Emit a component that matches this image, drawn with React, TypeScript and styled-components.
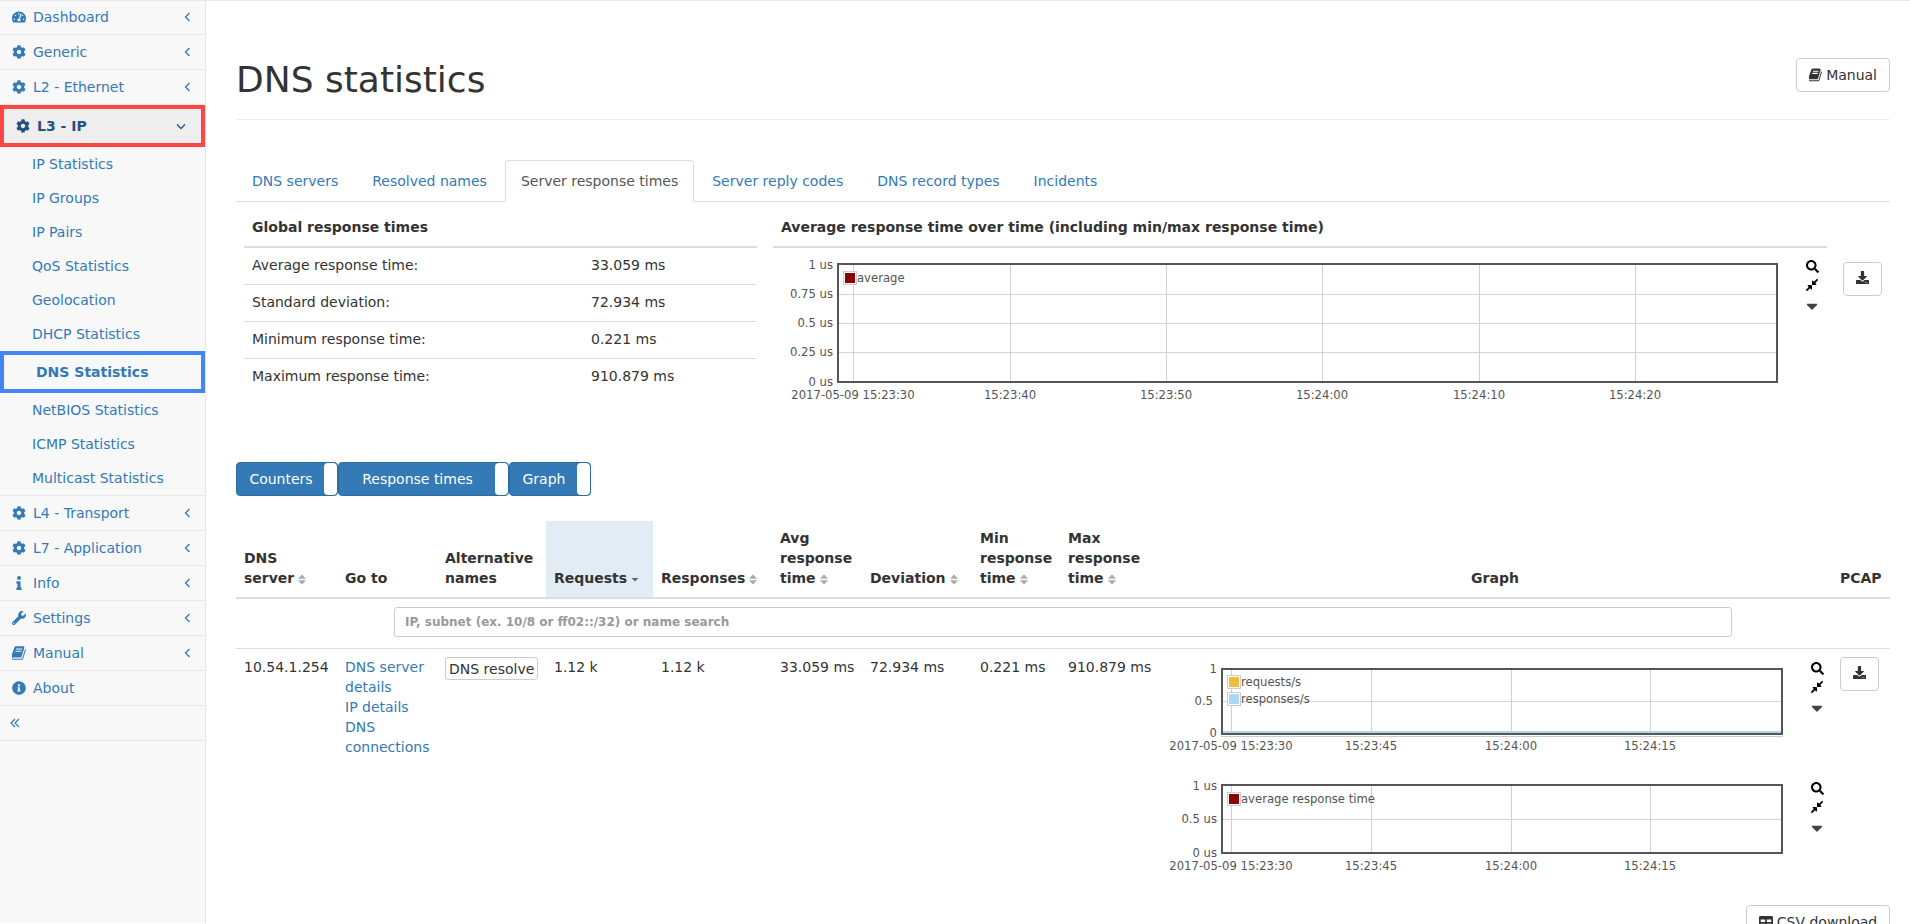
import React from 'react'
import styled, { createGlobalStyle } from 'styled-components'
import {
  FaCaretDown,
  FaCog,
  FaCompressAlt,
  FaDownload,
  FaInfo,
  FaInfoCircle,
  FaSearch,
  FaTable,
  FaTachometerAlt,
  FaWrench,
} from 'react-icons/fa'

const GlobalStyle = createGlobalStyle`
  html, body {
    margin: 0;
    height: 924px;
    overflow: hidden;
    background: #fff;
  }
  body {
    font-family: "DejaVu Sans", sans-serif;
    font-size: 14px;
    line-height: 20px;
    color: #333;
  }
  * {
    box-sizing: border-box;
  }
`

const Page = styled.div`
  display: flex;
  width: 1910px;
  height: 924px;
  overflow: hidden;
  border-top: 1px solid #e7e7e7;
`

// sidebar
const Sidebar = styled.nav`
  flex: 0 0 206px;
  height: 923px;
  margin-top: -1px;
  background: #f8f8f8;
  border-right: 1px solid #e7e7e7;
`

const MenuItem = styled.a`
  display: flex;
  align-items: center;
  height: 35px;
  border-bottom: 1px solid #e7e7e7;
  color: #337ab7;
`

const ActiveMenuItem = styled(MenuItem)`
  height: 42px;
  border: 4px solid #ff4646;
  background: #eee;
  color: #23527c;
  font-weight: 700;
`

const MenuIcon = styled.span`
  display: flex;
  justify-content: center;
  width: 14px;
  margin: 0 7px 0 12px;
  font-size: 14px;
`

const MenuLabel = styled.span`
  flex: 1;
`

const MenuChevron = styled.span<{ $right?: number }>`
  display: flex;
  justify-content: center;
  width: 14px;
  margin-right: ${(p) => p.$right ?? 11}px;
`

const SubMenu = styled.div`
  border-bottom: 1px solid #e7e7e7;
`

const SubItem = styled.a`
  display: flex;
  align-items: center;
  height: 34px;
  padding-left: 32px;
  color: #337ab7;
`

const ActiveSubItem = styled(SubItem)`
  height: 42px;
  padding-left: 32px;
  border: 4px solid #4285f4;
  font-weight: 700;
`

const CollapseItem = styled(MenuItem)`
  padding-left: 10px;
`

// main column
const Main = styled.main`
  flex: 1;
  padding: 0 20px 0 30px;
`

const PageHeader = styled.header`
  display: flex;
  justify-content: space-between;
  height: 119px;
  border-bottom: 1px solid #eee;
`

const Title = styled.h1`
  margin: 59px 0 0;
  font-size: 36px;
  line-height: 40px;
  font-weight: 500;
`

const DefaultButton = styled.button`
  display: inline-flex;
  align-items: center;
  justify-content: center;
  gap: 4px;
  height: 34px;
  padding: 0 12px;
  font: inherit;
  color: #333;
  background: #fff;
  border: 1px solid #ccc;
  border-radius: 4px;
`

const ManualButton = styled(DefaultButton)`
  margin-top: 57px;
  width: 94px;
`

const Tabs = styled.ul`
  display: flex;
  height: 42px;
  margin: 40px 0 0;
  padding: 0;
  list-style: none;
  border-bottom: 1px solid #ddd;
`

const Tab = styled.li<{ $active?: boolean }>`
  height: 42px;
  margin-right: 2px;
  padding: 10px 15px;
  border: 1px solid ${(p) => (p.$active ? '#ddd' : 'transparent')};
  border-bottom-color: ${(p) => (p.$active ? '#fff' : 'transparent')};
  border-radius: 4px 4px 0 0;
  background: ${(p) => (p.$active ? '#fff' : 'transparent')};
  color: ${(p) => (p.$active ? '#555' : '#337ab7')};
`

const Overview = styled.section`
  display: flex;
  align-items: flex-start;
  height: 260px;
  padding: 8px 0 0 8px;
`

const StatsTable = styled.table`
  width: 513px;
  border-collapse: separate;
  border-spacing: 0;
  table-layout: fixed;
  th {
    height: 38px;
    padding: 7px 8px 9px;
    text-align: left;
    border-bottom: 2px solid #ddd;
  }
  td {
    height: 37px;
    padding: 7px 8px 9px;
    vertical-align: top;
    border-bottom: 1px solid #ddd;
  }
  tr:last-child td {
    border-bottom: none;
  }
`

const ChartPanel = styled.div`
  width: 1054px;
  margin-left: 16px;
`

const ChartHeading = styled.div`
  height: 38px;
  padding: 7px 8px 9px;
  font-weight: 700;
  border-bottom: 2px solid #ddd;
`

const ChartRow = styled.div<{ $height?: number }>`
  display: flex;
  align-items: flex-start;
  height: ${(p) => p.$height ?? 120}px;
`

const ChartSvg = styled.svg`
  display: block;
  flex: none;
  font-family: "DejaVu Sans", sans-serif;
  font-size: 11.62px;
  fill: #545454;
`

const ChartTools = styled.div<{ $top: number }>`
  display: flex;
  flex: none;
  flex-direction: column;
  align-items: center;
  width: 24px;
  padding-top: ${(p) => p.$top}px;
  color: #000;
  svg {
    display: block;
    flex: none;
    width: 13px;
    height: 13px;
    margin-bottom: 5.5px;
  }
  svg:nth-child(2) {
    width: 14px;
    height: 14px;
  }
  svg:last-child {
    margin: -0.5px 0 0;
    width: 12px;
    height: 18px;
    color: #444;
  }
`

const OverviewDownload = styled(DefaultButton)`
  width: 39px;
  padding: 0 0 3px;
  margin: 52px 0 0 16px;
  font-size: 13px;
`

const PcapButton = styled(DefaultButton)`
  width: 39px;
  padding: 0 0 3px;
  font-size: 13px;
`

const ToggleBar = styled.div`
  display: flex;
  height: 34px;
  margin-bottom: 25px;
`

const Toggle = styled.div<{ $width: number }>`
  display: flex;
  width: ${(p) => p.$width}px;
  background: #337ab7;
  border: 1px solid #2e6da4;
  border-radius: 4px;
  color: #fff;
  overflow: hidden;
`

const ToggleLabel = styled.span`
  flex: 1;
  padding-left: 1px;
  text-align: center;
  line-height: 32px;
`

const ToggleHandle = styled.span`
  flex: 0 0 13px;
  background: #fff;
  border-radius: 4px;
`

const DataTable = styled.table`
  width: 1654px;
  border-collapse: separate;
  border-spacing: 0;
  table-layout: fixed;
`

const HeadCell = styled.th<{ $sorted?: boolean; $center?: boolean }>`
  height: 78px;
  padding: 7px 8px 9px;
  vertical-align: bottom;
  text-align: ${(p) => (p.$center ? 'center' : 'left')};
  border-bottom: 2px solid #ddd;
  background: ${(p) => (p.$sorted ? '#e1ecf4' : 'transparent')};
`

const SortMark = styled.svg`
  display: inline-block;
  width: 8px;
  height: 11px;
  margin-left: 4px;
  vertical-align: -2px;
`

const FilterCell = styled.td`
  height: 50px;
  padding: 8px 0 0 158px;
  vertical-align: top;
  border-bottom: 1px solid #ddd;
`

const SearchInput = styled.input`
  display: block;
  width: 1338px;
  height: 30px;
  padding: 5px 10px;
  font: 700 12px "DejaVu Sans", sans-serif;
  border: 1px solid #ccc;
  border-radius: 3px;
  &::placeholder {
    color: #999;
    opacity: 1;
  }
`

const BodyCell = styled.td`
  height: 256px;
  padding: 8px;
  vertical-align: top;
  white-space: nowrap;
`

const GoToCell = styled(BodyCell)`
  white-space: normal;
`

const GoToLink = styled.a`
  display: block;
  color: #337ab7;
`

const AliasBadge = styled.span`
  display: block;
  width: 93px;
  height: 23px;
  padding: 1px 0 0 3px;
  line-height: 20px;
  white-space: nowrap;
  overflow: hidden;
  border: 1px solid #ccc;
  border-radius: 3px;
`

const Footer = styled.div`
  display: flex;
  justify-content: flex-end;
`

const CsvButton = styled(DefaultButton)`
  width: 144px;
  padding: 0;
`

const BookIcon = () => (
  <svg width="14" height="14" viewBox="110 110 1580 1580" fill="currentColor">
    <path d="M1639 478q40 57 18 129l-275 906q-19 64-76.5 107.5t-122.5 43.5h-923q-77 0-148.5-53.5t-99.5-131.5q-24-67-2-127 0-4 3-27t4-37q1-8-3-21.5t-3-19.5q2-11 8-21t16.5-23.5 16.5-23.5q23-38 45-91.5t30-91.5q3-10 .5-30t-.5-28q3-11 17-28t17-23q21-36 42-92t25-90q1-9-2.5-32t.5-28q4-13 22-30.5t22-22.5q19-26 42.5-84.5t27.5-96.5q1-8-3-25.5t-2-26.5q2-8 9-18t18-23 17-21q8-12 16.5-30.5t15-35 16-36 19.5-32 26.5-23.5 36-11.5 47.5 5.5l-1 3q38-9 51-9h761q74 0 114 56t18 130l-274 906q-36 119-71.5 153.5t-128.5 34.5h-869q-27 0-38 15-11 16-1 43 24 70 144 70h923q29 0 56-15.5t35-41.5l300-987q7-22 5-57 38 15 59 43zm-1064 2q-4 13 2 22.5t20 9.5h608q13 0 25.5-9.5t16.5-22.5l21-64q4-13-2-22.5t-20-9.5h-608q-13 0-25.5 9.5t-16.5 22.5zm-83 256q-4 13 2 22.5t20 9.5h608q13 0 25.5-9.5t16.5-22.5l21-64q4-13-2-22.5t-20-9.5h-608q-13 0-25.5 9.5t-16.5 22.5z" />
  </svg>
)

// thin chevrons of the menu
const AngleLeft = () => (
  <svg width="7" height="10" viewBox="0 0 7 10" fill="none" stroke="currentColor" strokeWidth="1.3">
    <path d="M5.5 1 1.5 5l4 4" />
  </svg>
)

const AngleDown = () => (
  <svg width="10" height="7" viewBox="0 0 10 7" fill="none" stroke="currentColor" strokeWidth="1.3">
    <path d="M1 1.5 5 5.5l4-4" />
  </svg>
)

const AngleDoubleLeft = () => (
  <svg width="10" height="10" viewBox="0 0 10 10" fill="none" stroke="currentColor" strokeWidth="1.2">
    <path d="M5 1 1 5l4 4M9 1 5 5l4 4" />
  </svg>
)

const SortIcon = ({ active }: { active?: boolean }) => (
  <SortMark viewBox="0 0 8 11">
    {active ? (
      <path d="M.5 4h7L4 7.5z" fill="#666" />
    ) : (
      <>
        <path d="M0 4.8h8L4 .5z" fill="#aaa" />
        <path d="M0 6.2h8l-4 4.3z" fill="#aaa" />
      </>
    )}
  </SortMark>
)

type Tick = { at: number; label: string; right?: number }
type LegendEntry = { color: string; label: string; y: number }

type ChartProps = {
  width: number
  height: number
  plot: { x: number; y: number; w: number; h: number }
  xTicks: Tick[]
  xLabelY: number
  yTicks: Tick[]
  yRight: number
  hGrid: number[]
  legendX: number
  legend: LegendEntry[]
  flatLine?: string
}

const Chart: React.FC<ChartProps> = ({
  width,
  height,
  plot,
  xTicks,
  xLabelY,
  yTicks,
  yRight,
  hGrid,
  legendX,
  legend,
  flatLine,
}) => (
  <ChartSvg width={width} height={height}>
    {hGrid.map((y) => (
      <line key={y} x1={plot.x} x2={plot.x + plot.w} y1={y + 0.5} y2={y + 0.5} stroke="#d4d4d4" />
    ))}
    {xTicks.map((t) => (
      <line key={t.at} x1={t.at + 0.5} x2={t.at + 0.5} y1={plot.y} y2={plot.y + plot.h} stroke="#d0d0d0" />
    ))}
    {flatLine ? (
      <>
        <line x1={plot.x} x2={plot.x + plot.w} y1={plot.y + plot.h + 1.5} y2={plot.y + plot.h + 1.5} stroke="#ccc" />
        <line x1={plot.x} x2={plot.x + plot.w} y1={plot.y + plot.h - 3} y2={plot.y + plot.h - 3} stroke={flatLine} strokeWidth="2" />
      </>
    ) : null}
    <rect x={plot.x + 1} y={plot.y + 1} width={plot.w - 2} height={plot.h - 2} fill="none" stroke="#555" strokeWidth="2" />
    {xTicks.map((t) => (
      <text key={t.at} x={t.at} y={xLabelY} textAnchor="middle" dominantBaseline="central">
        {t.label}
      </text>
    ))}
    {yTicks.map((t) => (
      <text key={t.label} x={t.right ?? yRight} y={t.at} textAnchor="end" dominantBaseline="central">
        {t.label}
      </text>
    ))}
    {legend.map((l) => (
      <g key={l.label}>
        <rect x={legendX + 0.5} y={l.y + 0.5} width="13" height="13" fill="#fff" stroke="#ccc" />
        <rect x={legendX + 2} y={l.y + 2} width="10" height="10" fill={l.color} />
        <text x={legendX + 14} y={l.y + 6.5} dominantBaseline="central">
          {l.label}
        </text>
      </g>
    ))}
  </ChartSvg>
)

const Tools = ({ top }: { top: number }) => (
  <ChartTools $top={top}>
    <FaSearch />
    <FaCompressAlt />
    <FaCaretDown />
  </ChartTools>
)

const topMenu = [
  { label: 'Dashboard', icon: <FaTachometerAlt /> },
  { label: 'Generic', icon: <FaCog /> },
  { label: 'L2 - Ethernet', icon: <FaCog /> },
]

const bottomMenu = [
  { label: 'L4 - Transport', icon: <FaCog /> },
  { label: 'L7 - Application', icon: <FaCog /> },
  { label: 'Info', icon: <FaInfo /> },
  { label: 'Settings', icon: <FaWrench /> },
  { label: 'Manual', icon: <BookIcon /> },
]

const tabs = [
  'DNS servers',
  'Resolved names',
  'Server response times',
  'Server reply codes',
  'DNS record types',
  'Incidents',
]

const globalTimes = [
  ['Average response time:', '33.059 ms'],
  ['Standard deviation:', '72.934 ms'],
  ['Minimum response time:', '0.221 ms'],
  ['Maximum response time:', '910.879 ms'],
]

const columnWidths = [101, 100, 109, 107, 119, 90, 110, 88, 98, 674, 58]

const rowTimeTicks = [
  { at: 65, label: '2017-05-09 15:23:30' },
  { at: 205, label: '15:23:45' },
  { at: 345, label: '15:24:00' },
  { at: 484, label: '15:24:15' },
]

const App: React.FC = () => (
  <>
    <GlobalStyle />
    <Page>
      <Sidebar>
        {topMenu.map((m) => (
          <MenuItem key={m.label}>
            <MenuIcon>{m.icon}</MenuIcon>
            <MenuLabel>{m.label}</MenuLabel>
            <MenuChevron>
              <AngleLeft />
            </MenuChevron>
          </MenuItem>
        ))}
        <ActiveMenuItem>
          <MenuIcon>
            <FaCog />
          </MenuIcon>
          <MenuLabel>L3 - IP</MenuLabel>
          <MenuChevron $right={13}>
            <AngleDown />
          </MenuChevron>
        </ActiveMenuItem>
        <SubMenu>
          <SubItem>IP Statistics</SubItem>
          <SubItem>IP Groups</SubItem>
          <SubItem>IP Pairs</SubItem>
          <SubItem>QoS Statistics</SubItem>
          <SubItem>Geolocation</SubItem>
          <SubItem>DHCP Statistics</SubItem>
          <ActiveSubItem>DNS Statistics</ActiveSubItem>
          <SubItem>NetBIOS Statistics</SubItem>
          <SubItem>ICMP Statistics</SubItem>
          <SubItem>Multicast Statistics</SubItem>
        </SubMenu>
        {bottomMenu.map((m) => (
          <MenuItem key={m.label}>
            <MenuIcon>{m.icon}</MenuIcon>
            <MenuLabel>{m.label}</MenuLabel>
            <MenuChevron>
              <AngleLeft />
            </MenuChevron>
          </MenuItem>
        ))}
        <MenuItem>
          <MenuIcon>
            <FaInfoCircle />
          </MenuIcon>
          <MenuLabel>About</MenuLabel>
        </MenuItem>
        <CollapseItem>
          <AngleDoubleLeft />
        </CollapseItem>
      </Sidebar>
      <Main>
        <PageHeader>
          <Title>DNS statistics</Title>
          <ManualButton>
            <BookIcon /> Manual
          </ManualButton>
        </PageHeader>
        <Tabs>
          {tabs.map((t) => (
            <Tab key={t} $active={t === 'Server response times'}>
              {t}
            </Tab>
          ))}
        </Tabs>
        <Overview>
          <StatsTable>
            <colgroup>
              <col width={339} />
              <col width={174} />
            </colgroup>
            <thead>
              <tr>
                <th colSpan={2}>Global response times</th>
              </tr>
            </thead>
            <tbody>
              {globalTimes.map(([name, value]) => (
                <tr key={name}>
                  <td>{name}</td>
                  <td>{value}</td>
                </tr>
              ))}
            </tbody>
          </StatsTable>
          <ChartPanel>
            <ChartHeading>Average response time over time (including min/max response time)</ChartHeading>
            <ChartRow $height={160}>
              <Chart
                width={1027}
                height={160}
                plot={{ x: 64, y: 15, w: 941, h: 120 }}
                xTicks={[
                  { at: 80, label: '2017-05-09 15:23:30' },
                  { at: 237, label: '15:23:40' },
                  { at: 393, label: '15:23:50' },
                  { at: 549, label: '15:24:00' },
                  { at: 706, label: '15:24:10' },
                  { at: 862, label: '15:24:20' },
                ]}
                xLabelY={147}
                yTicks={[
                  { at: 17, label: '1 us' },
                  { at: 46, label: '0.75 us' },
                  { at: 75, label: '0.5 us' },
                  { at: 104, label: '0.25 us' },
                  { at: 134, label: '0 us' },
                ]}
                yRight={60}
                hGrid={[46, 75, 104]}
                legendX={70}
                legend={[{ color: '#8b0000', label: 'average', y: 23 }]}
              />
              <Tools top={11.5} />
            </ChartRow>
          </ChartPanel>
          <OverviewDownload>
            <FaDownload />
          </OverviewDownload>
        </Overview>
        <ToggleBar>
          <Toggle $width={102}>
            <ToggleLabel>Counters</ToggleLabel>
            <ToggleHandle />
          </Toggle>
          <Toggle $width={171}>
            <ToggleLabel>Response times</ToggleLabel>
            <ToggleHandle />
          </Toggle>
          <Toggle $width={82}>
            <ToggleLabel>Graph</ToggleLabel>
            <ToggleHandle />
          </Toggle>
        </ToggleBar>
        <DataTable>
          <colgroup>
            {columnWidths.map((w, i) => (
              <col key={i} width={w} />
            ))}
          </colgroup>
          <thead>
            <tr>
              <HeadCell>
                DNS server
                <SortIcon />
              </HeadCell>
              <HeadCell>Go to</HeadCell>
              <HeadCell>Alternative names</HeadCell>
              <HeadCell $sorted>
                Requests
                <SortIcon active />
              </HeadCell>
              <HeadCell>
                Responses
                <SortIcon />
              </HeadCell>
              <HeadCell>
                Avg response time
                <SortIcon />
              </HeadCell>
              <HeadCell>
                Deviation
                <SortIcon />
              </HeadCell>
              <HeadCell>
                Min response time
                <SortIcon />
              </HeadCell>
              <HeadCell>
                Max response time
                <SortIcon />
              </HeadCell>
              <HeadCell $center>Graph</HeadCell>
              <HeadCell>PCAP</HeadCell>
            </tr>
          </thead>
          <tbody>
            <tr>
              <FilterCell colSpan={11}>
                <SearchInput placeholder="IP, subnet (ex. 10/8 or ff02::/32) or name search" />
              </FilterCell>
            </tr>
            <tr>
              <BodyCell>10.54.1.254</BodyCell>
              <GoToCell>
                <GoToLink>DNS server details</GoToLink>
                <GoToLink>IP details</GoToLink>
                <GoToLink>DNS connections</GoToLink>
              </GoToCell>
              <BodyCell>
                <AliasBadge>DNS resolve</AliasBadge>
              </BodyCell>
              <BodyCell>1.12 k</BodyCell>
              <BodyCell>1.12 k</BodyCell>
              <BodyCell>33.059 ms</BodyCell>
              <BodyCell>72.934 ms</BodyCell>
              <BodyCell>0.221 ms</BodyCell>
              <BodyCell>910.879 ms</BodyCell>
              <BodyCell>
                <ChartRow>
                  <Chart
                    width={639}
                    height={120}
                    plot={{ x: 55, y: 11, w: 562, h: 67 }}
                    xTicks={rowTimeTicks}
                    xLabelY={89}
                    yTicks={[
                      { at: 12, label: '1', right: 51 },
                      { at: 44, label: '0.5' },
                      { at: 76, label: '0', right: 51 },
                    ]}
                    yRight={47}
                    hGrid={[44]}
                    legendX={61}
                    legend={[
                      { color: '#eebf36', label: 'requests/s', y: 18 },
                      { color: '#aed6f7', label: 'responses/s', y: 35 },
                    ]}
                    flatLine="#aed6f7"
                  />
                  <Tools top={4.5} />
                </ChartRow>
                <ChartRow>
                  <Chart
                    width={639}
                    height={120}
                    plot={{ x: 55, y: 7, w: 562, h: 70 }}
                    xTicks={rowTimeTicks}
                    xLabelY={89}
                    yTicks={[
                      { at: 9, label: '1 us' },
                      { at: 42, label: '0.5 us' },
                      { at: 76, label: '0 us' },
                    ]}
                    yRight={51}
                    hGrid={[42]}
                    legendX={61}
                    legend={[{ color: '#8b0000', label: 'average response time', y: 15 }]}
                  />
                  <Tools top={4.5} />
                </ChartRow>
              </BodyCell>
              <BodyCell>
                <PcapButton>
                  <FaDownload />
                </PcapButton>
              </BodyCell>
            </tr>
          </tbody>
        </DataTable>
        <Footer>
          <CsvButton>
            <FaTable /> CSV download
          </CsvButton>
        </Footer>
      </Main>
    </Page>
  </>
)

export default App
